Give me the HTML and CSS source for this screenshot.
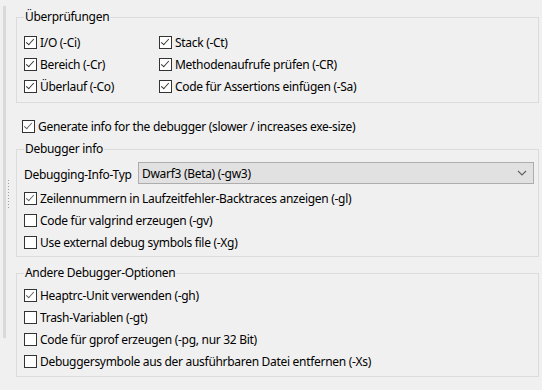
FILE: index.html
```html
<!DOCTYPE html>
<html lang="de">
<head>
  <meta charset="UTF-8">
  <title>Debuggen</title>
  <link rel="stylesheet" href="styles.css">
</head>
<body>

  <div class="window">
    <div class="splitter"><div class="grip"></div></div>

    <div class="panel">
      <fieldset class="group checks">
        <legend>Überprüfungen</legend>
        <div class="grid">
          <label class="row"><span class="box on"></span>I/O (-Ci)</label>
          <label class="row"><span class="box on"></span>Stack (-Ct)</label>
          <label class="row"><span class="box on"></span>Bereich (-Cr)</label>
          <label class="row"><span class="box on"></span>Methodenaufrufe prüfen (-CR)</label>
          <label class="row"><span class="box on"></span>Überlauf (-Co)</label>
          <label class="row"><span class="box on"></span>Code für Assertions einfügen (-Sa)</label>
        </div>
      </fieldset>

      <label class="row generate"><span class="box on soft"></span>Generate info for the debugger (slower / increases exe-size)</label>

      <fieldset class="group debug-info">
        <legend>Debugger info</legend>
        <div class="select-row">
          <span class="select-label">Debugging-Info-Typ</span>
          <div class="select">
            <span>Dwarf3 (Beta) (-gw3)</span>
            <svg class="chevron" width="10" height="6" viewBox="0 0 10 6"><polyline points="1,1 5,5 9,1" fill="none" stroke="#606060" stroke-width="1.1"/></svg>
          </div>
        </div>
        <label class="row"><span class="box on soft"></span>Zeilennummern in Laufzeitfehler-Backtraces anzeigen (-gl)</label>
        <label class="row"><span class="box"></span>Code für valgrind erzeugen (-gv)</label>
        <label class="row"><span class="box"></span>Use external debug symbols file (-Xg)</label>
      </fieldset>

      <fieldset class="group other">
        <legend>Andere Debugger-Optionen</legend>
        <label class="row"><span class="box on soft"></span>Heaptrc-Unit verwenden (-gh)</label>
        <label class="row"><span class="box"></span>Trash-Variablen (-gt)</label>
        <label class="row"><span class="box"></span>Code für gprof erzeugen (-pg, nur 32 Bit)</label>
        <label class="row"><span class="box"></span>Debuggersymbole aus der ausführbaren Datei entfernen (-Xs)</label>
      </fieldset>
    </div>
  </div>

</body>
</html>
```

FILE: styles.css
```css
body {
  margin: 0;
  background: #f0f0f0;
  font-family: "Noto Sans", "Open Sans", sans-serif;
  font-size: 12px;
  letter-spacing: -0.3px;
  color: #000;
}

.window {
  display: flex;
  height: 390px;
  overflow: hidden;
}

.splitter {
  width: 3px;
  margin: 6px 0 52px 3px;
  background: #d9d9d9;
  position: relative;
}

.grip {
  position: absolute;
  left: 5px;
  top: 174px;
  width: 1px;
  height: 30px;
  background: repeating-linear-gradient(#a0a0a0 0 1px, transparent 1px 3px);
}

.panel {
  flex: 1;
  padding: 9px 3px 0 10px;
}

.group {
  margin: 0;
  padding: 0 0 0 7px;
  border: 1px solid #dcdcdc;
  min-width: 0;
}

legend {
  padding: 0 1px;
  line-height: 16px;
}

.row {
  display: flex;
  align-items: center;
  height: 22px;
  white-space: nowrap;
}

.box {
  width: 11px;
  height: 11px;
  border: 1px solid #333;
  background: #fff;
  margin-right: 3px;
  flex: none;
  position: relative;
}

.box.on::after {
  content: "";
  position: absolute;
  left: 3px;
  top: 0;
  width: 3px;
  height: 7px;
  border-right: 1.2px solid #333;
  border-bottom: 1.2px solid #333;
  transform: rotate(42deg);
}

.box.soft.on::after {
  border-color: #5e5e5e;
}

.checks .grid {
  display: grid;
  grid-template-columns: 135px auto;
  padding: 6px 0 5px;
}

.generate {
  margin: 12px 0 4px 6px;
}

.debug-info {
  padding-top: 5px;
  padding-bottom: 3px;
}

.select-row {
  display: flex;
  align-items: center;
  height: 22px;
  margin-bottom: 3px;
}

.select-label {
  width: 114px;
  padding-top: 3px;
}

.select {
  flex: 1;
  height: 20px;
  margin-right: 4px;
  border: 1px solid #adadad;
  background: #e1e1e1;
  display: flex;
  align-items: center;
  justify-content: space-between;
  padding: 0 6px 0 3px;
}

.other {
  margin-top: 8px;
  padding-top: 3px;
  padding-bottom: 4px;
}
```
